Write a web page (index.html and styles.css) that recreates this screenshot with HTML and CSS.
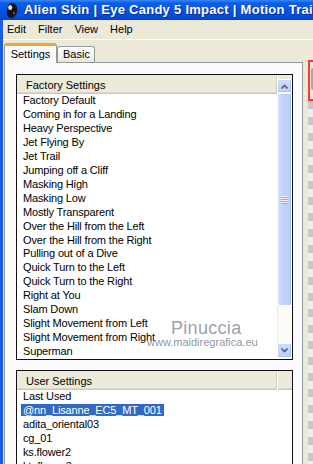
FILE: index.html
```html
<!DOCTYPE html>
<html lang="en">
<head>
    <meta charset="UTF-8">
    <meta name="viewport" content="width=device-width, initial-scale=1.0">
    <title>Motion Trail</title>
    <link rel="stylesheet" href="styles.css">
</head>
<body>
    <header class="titlebar">
        <svg class="app-icon" width="12" height="17" viewBox="0 0 12 17">
            <path d="M6 1 C10 1 11.5 5 11 9 C10.5 13 8 16 5 16 C2 16 0.5 13 1 9 C1.5 5 2.5 1 6 1 Z" fill="#111"/>
            <ellipse cx="4.2" cy="5.5" rx="2" ry="2.6" fill="#e8e8e8"/>
            <ellipse cx="8" cy="11" rx="1.2" ry="1.6" fill="#555"/>
        </svg>
        <span class="title">Alien Skin | Eye Candy 5 Impact | Motion Trail</span>
    </header>

    <div class="frame">
        <nav class="menubar">
            <span>Edit</span>
            <span>Filter</span>
            <span>View</span>
            <span>Help</span>
        </nav>

        <div class="workspace">
            <div class="dialog">
                <div class="tabs">
                    <div class="tab active">Settings</div>
                    <div class="tab">Basic</div>
                </div>

                <div class="tab-page">
                    <div class="listbox factory">
                        <div class="list-header">
                            <span class="col-name">Factory Settings</span>
                            <span class="col-rest"></span>
                        </div>
                        <ul class="items">
                            <li>Factory Default</li>
                            <li>Coming in for a Landing</li>
                            <li>Heavy Perspective</li>
                            <li>Jet Flying By</li>
                            <li>Jet Trail</li>
                            <li>Jumping off a Cliff</li>
                            <li>Masking High</li>
                            <li>Masking Low</li>
                            <li>Mostly Transparent</li>
                            <li>Over the Hill from the Left</li>
                            <li>Over the Hill from the Right</li>
                            <li>Pulling out of a Dive</li>
                            <li>Quick Turn to the Left</li>
                            <li>Quick Turn to the Right</li>
                            <li>Right at You</li>
                            <li>Slam Down</li>
                            <li>Slight Movement from Left</li>
                            <li>Slight Movement from Right</li>
                            <li>Superman</li>
                        </ul>
                        <div class="scrollbar">
                            <div class="sb-btn">
                                <svg width="7" height="5" viewBox="0 0 7 5"><polyline points="0.5,4.5 3.5,1.5 6.5,4.5" fill="none" stroke="#4d6185" stroke-width="1.6"/></svg>
                            </div>
                            <div class="sb-thumb"><span class="grip"></span></div>
                            <div class="sb-track"></div>
                            <div class="sb-btn">
                                <svg width="7" height="5" viewBox="0 0 7 5"><polyline points="0.5,0.5 3.5,3.5 6.5,0.5" fill="none" stroke="#4d6185" stroke-width="1.6"/></svg>
                            </div>
                        </div>
                        <!-- watermark sits over the list -->
                        <span class="wm-name">Pinuccia</span>
                        <span class="wm-site">www.maidiregrafica.eu</span>
                    </div>

                    <div class="listbox user">
                        <div class="list-header">
                            <span class="col-name">User Settings</span>
                            <span class="col-rest"></span>
                        </div>
                        <ul class="items">
                            <li>Last Used</li>
                            <li><span class="selected">@nn_Lisanne_EC5_MT_001</span></li>
                            <li>adita_oriental03</li>
                            <li>cg_01</li>
                            <li>ks.flower2</li>
                            <li>kt_flower3</li>
                        </ul>
                    </div>
                </div>
            </div>

            <div class="preview">
                <div class="preview-tool"><span class="knob"></span></div>
                <div class="checker"></div>
            </div>
        </div>
    </div>
</body>
</html>
```

FILE: styles.css
```css
* {
    box-sizing: border-box;
}

body {
    margin: 0;
    width: 313px;
    height: 464px;
    overflow: hidden;
    background-color: #ece9d8;
    font-family: "Liberation Sans", Arial, sans-serif;
    font-size: 11px;
    color: #000;
}

/* window title */
.titlebar {
    height: 20px;
    display: flex;
    align-items: center;
    gap: 6px;
    padding-left: 6px;
    background: linear-gradient(180deg, #3c86f4 0%, #0d5fea 14%, #0454e2 50%, #034cd8 85%, #0244c6 100%);
    white-space: nowrap;
    overflow: hidden;
}

.app-icon {
    flex-shrink: 0;
}

.title {
    color: #fff;
    font-size: 13px;
    font-weight: bold;
    letter-spacing: 0.27px;
    line-height: 20px;
    text-shadow: 1px 1px 0 #0a2c96;
}

.frame {
    height: 444px;
    display: flex;
    flex-direction: column;
    border-left: 3px solid #1a5ce6;
}

.menubar {
    height: 20px;
    line-height: 19px;
    display: flex;
    gap: 12px;
    padding-left: 4px;
    border-bottom: 1px solid #fff;
}

.workspace {
    flex: 1;
    display: flex;
    min-height: 0;
}

.dialog {
    width: 300px;
    flex-shrink: 0;
    padding-top: 3px;
    display: flex;
    flex-direction: column;
}

/* tabs */
.tabs {
    height: 19px;
    display: flex;
    align-items: flex-end;
    margin-left: 1px;
}

.tab {
    height: 16px;
    line-height: 15px;
    padding: 0 5px;
    border: 1px solid #919b9c;
    border-bottom: none;
    border-radius: 3px 3px 0 0;
    background: linear-gradient(180deg, #fff 0%, #f4f3ee 60%, #e8e6dc 100%);
    text-align: center;
}

.tab.active {
    position: relative;
    z-index: 1;
    width: 53px;
    height: 20px;
    line-height: 16px;
    margin-bottom: -1px;
    border-top: 3px solid #f2a434;
    border-radius: 3px 3px 0 0;
    background: #fcfcfe;
}

.tab.active + .tab {
    width: 38px;
}

.tab-page {
    flex: 1;
    margin-left: 1px;
    padding: 11px 9px 0 11px;
    border: 1px solid #919b9c;
    border-bottom: none;
    background: #fcfcfe;
    display: flex;
    flex-direction: column;
}

/* list boxes */
.listbox {
    border: 1px solid #111;
    background: #fff;
    display: grid;
    grid-template-columns: 1fr 15px;
    grid-template-rows: 19px 1fr;
    overflow: hidden;
}

.factory {
    position: relative;
    height: 286px;
    flex-shrink: 0;
}

.user {
    margin-top: 10px;
    flex: 1;
}

.list-header {
    grid-column: 1 / 3;
    grid-row: 1;
    display: flex;
    height: 19px;
    line-height: 20px;
    background: #ebeadb;
    box-shadow: inset 0 -1px 0 #cbc7b8, inset 0 -2px 0 #dcd9ca;
}

.col-name {
    width: 260px;
    padding-left: 9px;
    border-right: 1px solid #d4d0c0;
    box-shadow: 1px 0 0 #fff;
}

.col-rest {
    flex: 1;
}

.items {
    grid-column: 1;
    grid-row: 2;
    list-style: none;
    margin: 0;
    padding: 0;
}

.items li {
    line-height: 13.95px;
    padding-left: 6px;
    letter-spacing: -0.15px;
    white-space: nowrap;
}

.selected {
    background: #316ac5;
    color: #fff;
    padding: 0 2px;
    margin-left: -2px;
}

/* scrollbar */
.scrollbar {
    grid-column: 2;
    grid-row: 1 / 3;
    margin-top: 4px;
    margin-bottom: 1px;
    display: flex;
    flex-direction: column;
}

.sb-btn {
    height: 14px;
    display: flex;
    align-items: center;
    justify-content: center;
    background: linear-gradient(180deg, #cddcfd 0%, #bed1fb 100%);
    border: 1px solid #fff;
    border-radius: 2px;
    box-shadow: inset -1px -1px 0 #a9bff0;
}

.sb-btn:last-child {
    height: 15px;
}

.sb-thumb {
    height: 213px;
    display: flex;
    align-items: center;
    justify-content: center;
    background: linear-gradient(90deg, #d6e2fd 0%, #c2d4fb 30%, #b9cdf9 100%);
    border: 1px solid #fff;
    border-radius: 2px;
    box-shadow: inset -1px 0 0 #a7bdf0;
}

.grip {
    width: 7px;
    height: 8px;
    background: repeating-linear-gradient(180deg, #eef3fe 0 1px, #8eabec 1px 2px);
}

.sb-track {
    flex: 1;
    background: #fbfbf8;
    border-left: 1px solid #eeede5;
}

/* watermark */
.wm-name {
    position: absolute;
    left: 154px;
    top: 244px;
    font-size: 18px;
    line-height: 1;
    color: #9aa2b2;
    letter-spacing: 0.3px;
}

.wm-site {
    position: absolute;
    left: 130px;
    top: 262px;
    font-size: 11px;
    line-height: 1;
    color: rgba(120, 128, 144, 0.85);
}

/* preview edge */
.preview {
    flex: 1;
    padding: 20px 0 0 5px;
    display: flex;
    flex-direction: column;
    overflow: hidden;
}

.preview-tool {
    height: 41px;
    border: 2px solid #f03c3c;
    border-right: none;
    padding: 6px 0 0 1px;
}

.knob {
    display: block;
    height: 22px;
    background: #a8a8a8;
    border-radius: 3px 0 0 3px;
}

.checker {
    flex: 1;
    background: repeating-linear-gradient(180deg, #c8c8c8 0 8px, #ededed 8px 16px);
}
```
